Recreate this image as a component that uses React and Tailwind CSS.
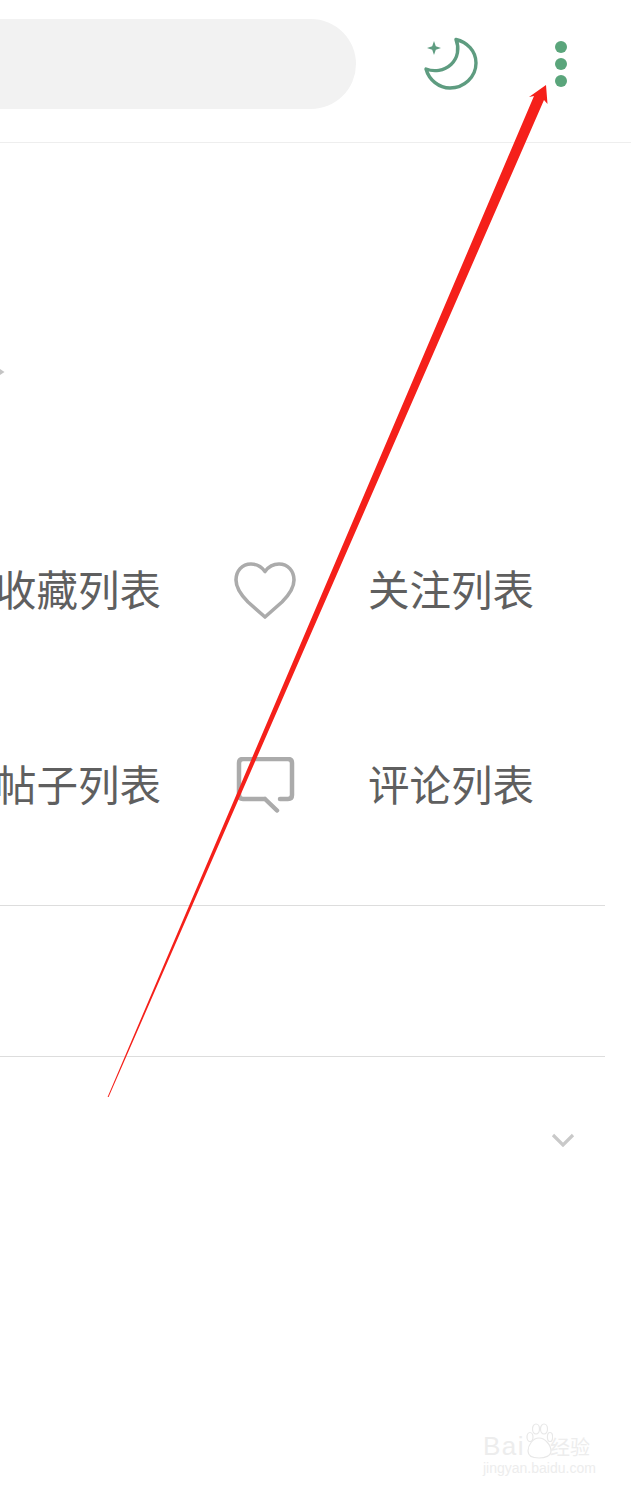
import React from 'react';

const cjk = { fontFamily: '"Noto Sans CJK SC", "Noto Sans", sans-serif' };

const MoonIcon = () => (
  <svg viewBox="0 0 60 60" className="w-[60px] h-[60px] shrink-0" fill="none">
    <path
      d="M36 5.5C39.5 14 38 24 31 30.5C24 37 14 38 6 35C9 46 19 54 30 54C44 54 56 43 56 29C56 17 47 8 36 5.5Z"
      stroke="#5e9c80"
      strokeWidth="3.4"
      strokeLinejoin="round"
    />
    <path d="M14 7L15.8 12.2L21 14L15.8 15.8L14 21L12.2 15.8L7 14L12.2 12.2Z" fill="#5e9c80" />
  </svg>
);

const HeartIcon = () => (
  <svg viewBox="0 0 62 58" className="w-[62px] h-[58px]" fill="none">
    <path
      d="M31 9.5C27 4 22 2 17 2C8 2 2 9 2 18C2 27 8 34 14 40L31 55L48 40C54 34 60 27 60 18C60 9 54 2 45 2C40 2 35 4 31 9.5Z"
      stroke="#ababab"
      strokeWidth="3.6"
      strokeLinejoin="round"
      strokeLinecap="round"
    />
  </svg>
);

const CommentIcon = () => (
  <svg viewBox="0 0 62 58" className="w-[62px] h-[58px]" fill="none">
    <path
      d="M31 42H9C6.5 42 5 40.5 5 38V6C5 3.500 6.500 2 9 2H54C56.500 2 58 3.500 58 6V38C58 40.500 56.500 42 54 42H46M31 42L43 53.500"
      stroke="#ababab"
      strokeWidth="4.500"
      strokeLinecap="round"
      strokeLinejoin="round"
    />
  </svg>
);

const MenuRow = ({ left, icon, right }) => (
  <div className="flex items-center h-[100px] text-[41.5px] text-[#5f5f5f]" style={cjk}>
    <span className="w-[161px] mb-[5px] flex justify-end whitespace-nowrap">{left}</span>
    <span className="w-[207px] flex justify-center">{icon}</span>
    <span className="mb-[5px] whitespace-nowrap">{right}</span>
  </div>
);

export default function App() {
  return (
    <div className="relative w-[631px] h-[1491px] overflow-hidden bg-white">
      {/* Barra superior */}
      <div className="flex items-center h-[143px] pb-[15px] border-b border-[#eeeeee]">
        <div className="w-[356px] h-[90px] shrink-0 rounded-r-[45px] bg-[#f2f2f2]" />
        <div className="ml-[64px]">
          <MoonIcon />
        </div>
        <div className="ml-[75px] flex flex-col gap-[5px]">
          <span className="w-[12px] h-[12px] rounded-full bg-[#5aa57b]" />
          <span className="w-[12px] h-[12px] rounded-full bg-[#5aa57b]" />
          <span className="w-[12px] h-[12px] rounded-full bg-[#5aa57b]" />
        </div>
      </div>

      {/* Lista de accesos */}
      <div className="mr-[26px] pt-[224px] border-b border-[#dddddd] h-[763px]">
        <svg viewBox="0 0 6 10" className="w-[6px] h-[10px]">
          <path d="M0 2L4.500 5L0 8Z" fill="#c4c4c4" />
        </svg>
        <div className="mt-[164px]">
          <MenuRow left="收藏列表" icon={<HeartIcon />} right="关注列表" />
        </div>
        <div className="mt-[95px]">
          <MenuRow left="帖子列表" icon={<CommentIcon />} right="评论列表" />
        </div>
      </div>

      <div className="mr-[26px] border-b border-[#dddddd] h-[151px]" />

      {/* Fila desplegable */}
      <div className="flex items-center justify-end h-[166px] pr-[56px]">
        <svg viewBox="0 0 24 14" className="w-[24px] h-[14px]" fill="none">
          <path d="M2 2L12 12L22 2" stroke="#c9c9c9" strokeWidth="3.2" />
        </svg>
      </div>

      {/* Flecha roja sobre la captura */}
      <svg viewBox="0 0 631 1491" className="absolute inset-0 w-[631px] h-[1491px] pointer-events-none">
        <polygon
          points="546,85 547.5,104 544,100 108.6,1097 107.6,1097 534,96 529,97"
          fill="#f5201a"
        />
      </svg>

      {/* Marca de agua */}
      <div className="absolute left-[483px] top-[1423px] w-[116px] text-[#ededed]">
        <div className="flex items-end h-[36px]">
          <span className="text-[26px] leading-[26px] tracking-[1.5px]" style={{ fontFamily: '"Liberation Sans", sans-serif' }}>
            Bai
          </span>
          <svg viewBox="0 0 28 36" className="w-[28px] h-[36px] shrink-0" fill="none" stroke="#e8e8e8" strokeWidth="1.2">
            <ellipse cx="5" cy="14" rx="3" ry="4.5" />
            <ellipse cx="11" cy="6" rx="3.5" ry="5" />
            <ellipse cx="19" cy="6" rx="3.5" ry="5" />
            <ellipse cx="25" cy="14" rx="2.6" ry="4.5" />
            <path d="M14 15C8 15 3 22 3 28C3 33 8 35 14 35C20 35 26 33 26 28C26 22 20 15 14 15Z" />
          </svg>
          <span className="ml-[-3px] text-[20px] leading-[24px]" style={cjk}>
            经验
          </span>
        </div>
        <div className="mt-[1px] text-[14px] leading-[16px] whitespace-nowrap" style={{ fontFamily: '"Liberation Sans", sans-serif' }}>
          jingyan.baidu.com
        </div>
      </div>
    </div>
  );
}
